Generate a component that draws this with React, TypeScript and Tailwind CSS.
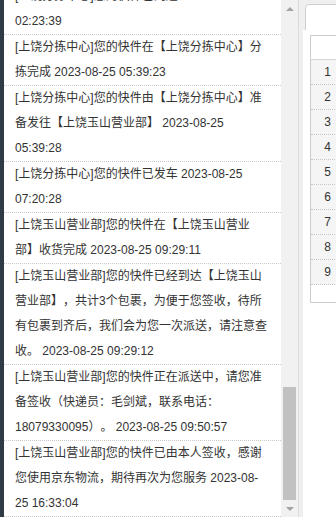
import React from 'react';

const items = [
  '[上饶分拣中心]您的快件已到达 2023-08-25 02:23:39',
  '[上饶分拣中心]您的快件在【上饶分拣中心】分拣完成 2023-08-25 05:39:23',
  '[上饶分拣中心]您的快件由【上饶分拣中心】准备发往【上饶玉山营业部】 2023-08-25 05:39:28',
  '[上饶分拣中心]您的快件已发车 2023-08-25 07:20:28',
  '[上饶玉山营业部]您的快件在【上饶玉山营业部】收货完成 2023-08-25 09:29:11',
  '[上饶玉山营业部]您的快件已经到达【上饶玉山营业部】，共计3个包裹，为便于您签收，待所有包裹到齐后，我们会为您一次派送，请注意查收。 2023-08-25 09:29:12',
  '[上饶玉山营业部]您的快件正在派送中，请您准备签收（快递员：毛剑斌，联系电话：18079330095）。 2023-08-25 09:50:57',
  '[上饶玉山营业部]您的快件已由本人签收，感谢您使用京东物流，期待再次为您服务 2023-08-25 16:33:04',
];

function Arrow({ down }: { down?: boolean }) {
  return (
    <div className="h-[17px] flex items-center justify-center">
      <svg width="8" height="4" viewBox="0 0 8 4">
        <polygon points={down ? '0,0 8,0 4,4' : '4,0 8,4 0,4'} fill="#a3a3a3" />
      </svg>
    </div>
  );
}

export default function App() {
  return (
    <div
      className="w-[336px] h-[517px] overflow-hidden flex bg-white text-[#333] [text-spacing-trim:space-all]"
      style={{ fontFamily: '"Liberation Sans", "Noto Sans CJK SC", sans-serif' }}
    >
      <div className="w-[4px] shrink-0 bg-[#2f3b46]" />

      {/* tracking list */}
      <div className="w-[277px] shrink-0 overflow-hidden">
        <div className="-mt-[16px]">
          {items.map((t, i) => (
            <div
              key={i}
              className="pl-[11px] pr-[12px] text-[12px] leading-[25px] border-b border-dotted border-[#c8c8c8]"
            >
              {t}
            </div>
          ))}
        </div>
      </div>

      {/* scrollbar */}
      <div className="w-[17px] shrink-0 bg-[#f1f1f1] flex flex-col">
        <Arrow />
        <div className="flex-1" />
        <div className="mx-[2px] h-[113px] bg-[#c1c1c1]" />
        <Arrow down />
      </div>

      <div className="w-[5px] shrink-0 border-l border-[#dcdcdc] bg-[#efefef]" />

      {/* right panel */}
      <div className="w-[220px] shrink-0 flex flex-col">
        <div className="h-[30px] bg-[#efefef] pt-[4px] pl-[2px]">
          <div className="h-[26px] w-[120px] bg-white border border-b-0 border-[#cfcfcf] rounded-tl-[5px]" />
        </div>
        <div className="px-[7px] pt-[5px]">
          <div className="border border-[#cccccc]">
            <div className="h-[24px] border-b border-[#d6d6d6]" />
            {[1, 2, 3, 4, 5, 6, 7, 8, 9].map((n) => (
              <div key={n} className="h-[25px] flex border-b border-dotted border-[#c8c8c8] bg-[#f5f5f5]">
                <div className="w-[33px] flex items-center justify-center text-[12px]">{n}</div>
              </div>
            ))}
            <div className="h-[17px]" />
          </div>
        </div>
      </div>
    </div>
  );
}
